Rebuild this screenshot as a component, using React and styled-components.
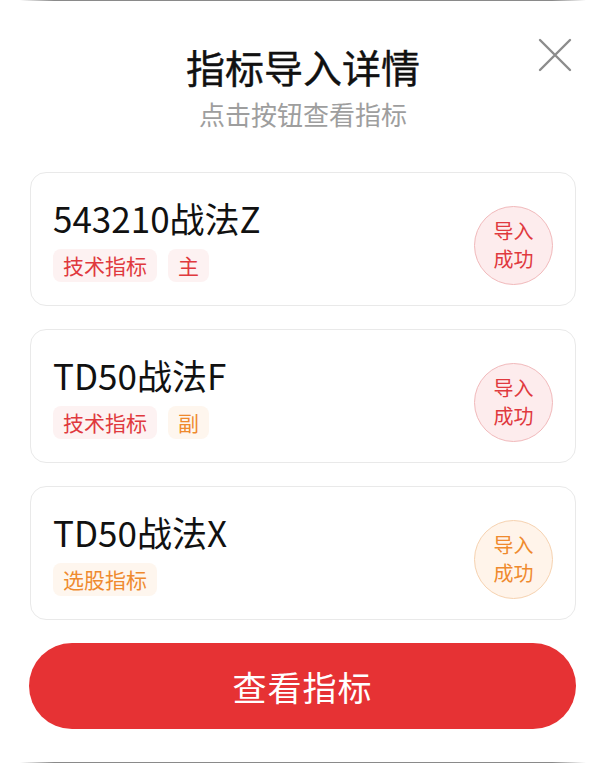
import React from "react";
import styled, { createGlobalStyle } from "styled-components";

// Page-level reset
const GlobalStyle = createGlobalStyle`
  html, body {
    margin: 0;
    padding: 0;
    background: #fff;
  }
  body {
    font-family: "Noto Sans CJK SC", "Noto Sans", sans-serif;
  }
`;

const Sheet = styled.div`
  position: relative;
  width: 606px;
  height: 763px;
  background: #fff;
  display: flex;
  flex-direction: column;
  overflow: hidden;
`;

const EdgeLine = styled.div`
  height: 1px;
  margin: 0 20px;
  background: linear-gradient(
    to right,
    rgba(120, 120, 120, 0) 0%,
    #8a8a8a 6%,
    #8a8a8a 94%,
    rgba(120, 120, 120, 0) 100%
  );
`;

const Header = styled.div`
  display: flex;
  flex-direction: column;
  align-items: center;
  padding-top: 42px;
`;

const Title = styled.h2`
  margin: 0;
  font-size: 39px;
  line-height: 46px;
  font-weight: 400;
  color: #111;
  -webkit-text-stroke: 0.4px #111;
`;

const Subtitle = styled.p`
  margin: 10px 0 0;
  font-size: 26px;
  line-height: 30px;
  color: #9e9e9e;
`;

const CloseButton = styled.button`
  position: absolute;
  top: 38px;
  right: 34px;
  width: 34px;
  height: 34px;
  padding: 0;
  border: none;
  background: transparent;
  cursor: pointer;
`;

const List = styled.div`
  display: flex;
  flex-direction: column;
  gap: 23px;
  padding: 0 30px;
  margin-top: 43px;
`;

const Card = styled.div`
  height: 134px;
  box-sizing: border-box;
  border: 1px solid #e9e9e9;
  border-radius: 16px;
  padding: 24px 22px 0 22px;
  display: flex;
  justify-content: space-between;
`;

const Info = styled.div`
  display: flex;
  flex-direction: column;
`;

const Name = styled.div`
  font-size: 35px;
  line-height: 42px;
  color: #111;
`;

const Tags = styled.div`
  display: flex;
  gap: 11px;
  margin-top: 10px;
`;

const palette = {
  red: { text: "#e0393e", bg: "#fdf2f2", soft: "#fdeced", line: "#f1b9bb" },
  orange: { text: "#ef8a2e", bg: "#fef6ee", soft: "#fff4ea", line: "#f6d2b0" },
};

const Tag = styled.span`
  height: 33px;
  line-height: 33px;
  padding: 0 10px;
  border-radius: 8px;
  font-size: 21px;
  color: ${(p) => palette[p.$tone].text};
  background: ${(p) => palette[p.$tone].bg};
`;

const Badge = styled.div`
  align-self: center;
  margin-top: -12px;
  width: 79px;
  height: 79px;
  box-sizing: border-box;
  border-radius: 50%;
  border: 1px solid ${(p) => palette[p.$tone].line};
  background: ${(p) => palette[p.$tone].soft};
  color: ${(p) => palette[p.$tone].text};
  font-size: 20px;
  line-height: 28px;
  display: flex;
  flex-direction: column;
  align-items: center;
  justify-content: center;
`;

const Footer = styled.div`
  padding: 23px 30px 0 29px;
  flex: 1;
`;

const PrimaryButton = styled.button`
  width: 100%;
  height: 86px;
  border: none;
  border-radius: 43px;
  background: #e63234;
  color: #fff;
  font-family: inherit;
  font-size: 34px;
  letter-spacing: 1px;
  cursor: pointer;
`;

const items = [
  {
    name: "543210战法Z",
    tags: [
      { label: "技术指标", tone: "red" },
      { label: "主", tone: "red" },
    ],
    tone: "red",
  },
  {
    name: "TD50战法F",
    tags: [
      { label: "技术指标", tone: "red" },
      { label: "副", tone: "orange" },
    ],
    tone: "red",
  },
  {
    name: "TD50战法X",
    tags: [{ label: "选股指标", tone: "orange" }],
    tone: "orange",
  },
];

const App = () => {
  return (
    <>
      <GlobalStyle />
      <Sheet>
        <EdgeLine />
        <Header>
          <Title>指标导入详情</Title>
          <Subtitle>点击按钮查看指标</Subtitle>
        </Header>
        <CloseButton aria-label="关闭">
          <svg width="34" height="34" viewBox="0 0 34 34">
            <path
              d="M2 2 L32 32 M32 2 L2 32"
              stroke="#8c8c8c"
              strokeWidth="2.4"
              strokeLinecap="round"
            />
          </svg>
        </CloseButton>
        <List>
          {items.map((item) => (
            <Card key={item.name}>
              <Info>
                <Name>{item.name}</Name>
                <Tags>
                  {item.tags.map((t) => (
                    <Tag key={t.label} $tone={t.tone}>
                      {t.label}
                    </Tag>
                  ))}
                </Tags>
              </Info>
              <Badge $tone={item.tone}>
                <span>导入</span>
                <span>成功</span>
              </Badge>
            </Card>
          ))}
        </List>
        <Footer>
          <PrimaryButton>查看指标</PrimaryButton>
        </Footer>
        <EdgeLine />
      </Sheet>
    </>
  );
};

export default App;
